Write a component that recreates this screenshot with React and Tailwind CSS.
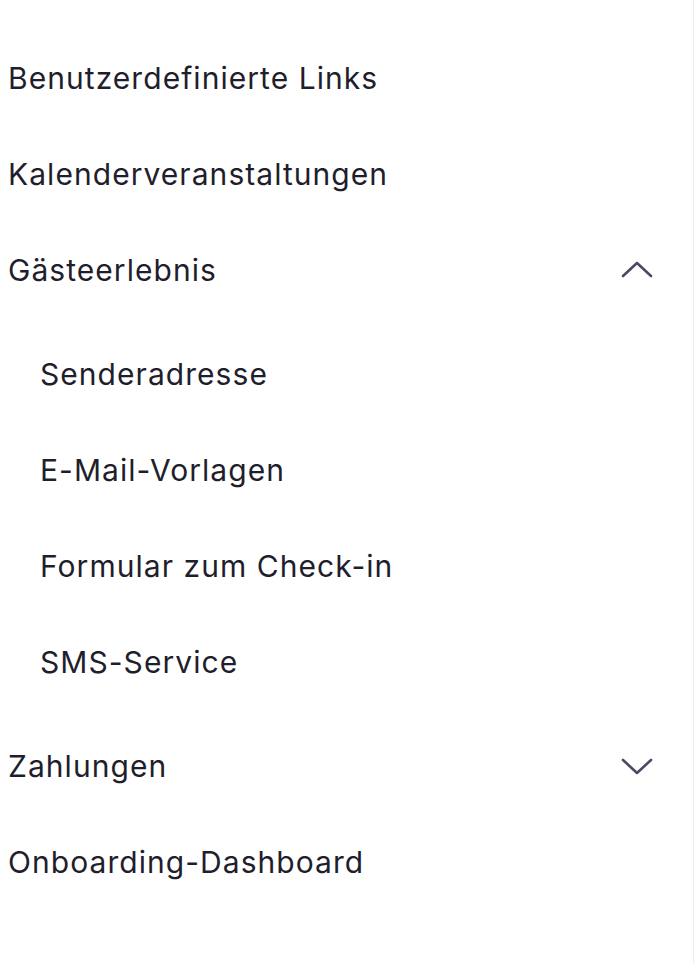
import React from "react";

const Chevron = ({ up }) => (
  <svg width="32" height="18" viewBox="0 0 32 18" fill="none" className="shrink-0">
    <polyline
      points={up ? "2,15 16,2 30,15" : "2,3 16,16 30,3"}
      stroke="#4b4966"
      strokeWidth="2.6"
      strokeLinecap="round"
      strokeLinejoin="round"
    />
  </svg>
);

const Item = ({ label, sub, chevron }) => (
  <div className={`flex items-center justify-between h-24 ${sub ? "pl-10" : "pl-2"} pr-10`}>
    <span className="text-[30px] leading-none text-[#1f1e2d] tracking-[1.05px]">{label}</span>
    {chevron && <Chevron up={chevron === "up"} />}
  </div>
);

export default function App() {
  return (
    <div
      className="w-[694px] h-[964px] bg-white border-r border-[#ececef] pt-[30px]"
      style={{ fontFamily: "Inter, 'Noto Sans', sans-serif" }}
    >
      <Item label="Benutzerdefinierte Links" />
      <Item label="Kalenderveranstaltungen" />
      <Item label="Gästeerlebnis" chevron="up" />
      <div className="py-2">
        <Item label="Senderadresse" sub />
        <Item label="E-Mail-Vorlagen" sub />
        <Item label="Formular zum Check-in" sub />
        <Item label="SMS-Service" sub />
      </div>
      <Item label="Zahlungen" chevron="down" />
      <Item label="Onboarding-Dashboard" />
    </div>
  );
}
